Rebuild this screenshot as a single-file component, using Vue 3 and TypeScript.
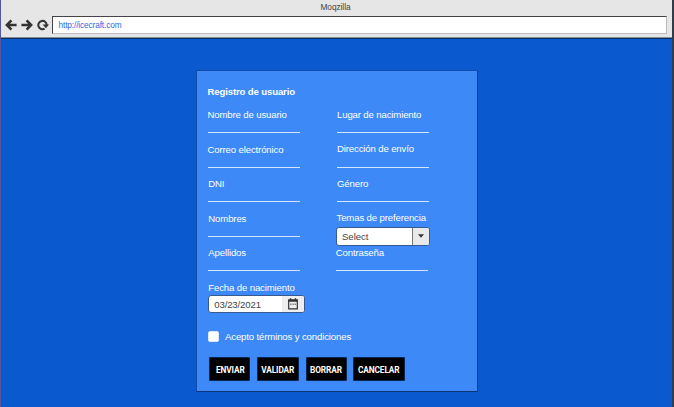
<script setup lang="ts">
import { ref } from 'vue'

interface Field {
  id: string
  label: string
}

const leftFields: Field[] = [
  { id: 'usuario', label: 'Nombre de usuario' },
  { id: 'correo', label: 'Correo electrónico' },
  { id: 'dni', label: 'DNI' },
  { id: 'nombres', label: 'Nombres' },
  { id: 'apellidos', label: 'Apellidos' },
]
const rightFields: Field[] = [
  { id: 'lugar', label: 'Lugar de nacimiento' },
  { id: 'direccion', label: 'Dirección de envío' },
  { id: 'genero', label: 'Género' },
]
const actions = ['enviar', 'validar', 'borrar', 'cancelar']
const accepted = ref(false)
</script>

<template>
  <div class="window">
    <header class="chrome">
      <div class="title">Moqzilla</div>
      <div class="toolbar">
        <svg class="nav" viewBox="0 0 12 12"><path d="M6.4 1.4 1.9 6l4.5 4.6M2.2 6H11.6" /></svg>
        <svg class="nav" viewBox="0 0 12 12"><path d="M5.6 1.4 10.1 6l-4.5 4.6M9.8 6H.4" /></svg>
        <svg class="nav reload" viewBox="0 0 12 12">
          <path d="M7.6 9.7A4.2 4.2 0 1 1 9.7 6.2" />
          <path class="head" d="M5.6 5.6H12L8.9 9.2z" />
        </svg>
        <div class="address">http://icecraft.com</div>
      </div>
    </header>

    <main class="page">
      <form class="panel" @submit.prevent>
        <h1>Registro de usuario</h1>
        <div class="columns">
          <div class="column left">
            <div v-for="f in leftFields" :key="f.id" class="field" :class="f.id">
              <span class="label">{{ f.label }}</span>
              <span class="line"></span>
            </div>
            <div class="field birth">
              <span class="label">Fecha de nacimiento</span>
              <div class="date">
                <span class="value">03/23/2021</span>
                <span class="calendar">
                  <svg viewBox="0 0 12 12">
                    <path class="frame" d="M1.7 2.2h8.6v8.6H1.7z" />
                    <path class="fill" d="M1.2 1.6h9.6v2.2H1.2zM2.8.3h1.5v2H2.8zM7.7.3h1.5v2H7.7z" />
                    <path class="days" d="M3.3 6.2h5.8" />
                  </svg>
                </span>
              </div>
            </div>
          </div>
          <div class="column right">
            <div v-for="f in rightFields" :key="f.id" class="field" :class="f.id">
              <span class="label">{{ f.label }}</span>
              <span class="line"></span>
            </div>
            <div class="field topics">
              <span class="label">Temas de preferencia</span>
              <div class="select">
                <span class="value">Select</span>
                <span class="arrow"><svg viewBox="0 0 6 4"><path d="M0 .2h6L3 3.8z" /></svg></span>
              </div>
            </div>
            <div class="field password">
              <span class="label">Contraseña</span>
              <span class="line"></span>
            </div>
          </div>
        </div>
        <label class="terms">
          <input v-model="accepted" type="checkbox" />
          <span>Acepto términos y condiciones</span>
        </label>
        <div class="actions">
          <button v-for="a in actions" :key="a" type="button" :class="a">{{ a.toUpperCase() }}</button>
        </div>
      </form>
    </main>
  </div>
</template>

<style>
body {
  margin: 0;
  overflow: hidden;
}
</style>

<style scoped>
* {
  box-sizing: border-box;
}
.window {
  width: 674px;
  height: 407px;
  display: flex;
  flex-direction: column;
  background: #0b59cf;
  border-left: 1px solid #55569c;
  border-right: 2px solid #343b49;
  font-family: "Liberation Sans", Arial, sans-serif;
  font-size: 9.6px;
  letter-spacing: -0.14px;
  color: #fff;
}
.chrome {
  height: 39px;
  flex: none;
  background: #e6e6e6;
  border-bottom: 1px solid #0c2d61;
  box-shadow: inset 0 -1px #858b94;
}
.title {
  height: 16px;
  padding: 2px 2px 0 0;
  line-height: 10px;
  font-size: 8.3px;
  letter-spacing: -0.05px;
  text-align: center;
  color: #444;
}
.toolbar {
  display: flex;
  align-items: center;
  height: 18px;
  padding: 0 5px 0 4px;
}
.nav {
  width: 12px;
  height: 12px;
  margin-right: 4px;
  fill: none;
  stroke: #333;
  stroke-width: 2.6;
}
.nav.reload {
  margin-right: 3px;
  stroke-width: 2;
}
.nav .head {
  fill: #333;
  stroke: none;
}
.address {
  flex: 1;
  height: 18px;
  padding-left: 5.5px;
  line-height: 17px;
  font-size: 8.3px;
  letter-spacing: -0.13px;
  color: #3468df;
  background: #fff;
  border: 1px solid #444;
  border-right-color: #bbb;
  border-bottom-color: #bbb;
}
.page {
  flex: 1;
  padding: 31px 0 0 195px;
}
.panel {
  width: 282px;
  height: 322px;
  padding: 15px 0 0 10.5px;
  background: #3c89f7;
  border: 1px solid #114cab;
  border-right-color: #0d408f;
  border-bottom-color: #0d3679;
}
h1 {
  height: 23px;
  margin: 0;
  line-height: 12px;
  font-size: 9.6px;
  font-weight: bold;
}
.columns {
  display: flex;
  height: 208px;
}
.column {
  width: 129px;
}
.field {
  height: 34.5px;
}
.label {
  display: block;
  height: 23px;
  line-height: 12px;
  white-space: nowrap;
}
.left .dni,
.left .nombres,
.left .apellidos,
.left .birth {
  padding-left: 0.8px;
}
.right .label {
  position: relative;
  top: -0.3px;
}
.line {
  display: block;
  width: 92px;
  height: 1px;
  background: #d3e5ff;
}
.genero,
.lugar,
.direccion {
  padding-left: 0.5px;
}
.topics .label,
.birth .label {
  height: 14px;
}
.birth .label {
  height: 13.3px;
}
.select,
.date {
  display: flex;
  overflow: hidden;
  background: #fff;
  border: 1px solid #365a91;
  border-radius: 3px;
  color: #444;
  letter-spacing: -0.05px;
}
.select {
  width: 94px;
  height: 19px;
  margin: 0 0 0 -0.5px;
  line-height: 18px;
}
.value {
  flex: 1;
  padding-left: 5px;
}
.arrow {
  width: 17px;
  display: flex;
  align-items: center;
  justify-content: center;
  background: #e9e9e9;
  border-left: 1px solid #777;
}
.arrow svg {
  width: 6px;
  height: 4px;
  fill: #333;
}
.date {
  width: 97px;
  height: 18px;
  line-height: 17px;
  letter-spacing: -0.15px;
}
.calendar {
  width: 22px;
  display: flex;
  align-items: center;
  justify-content: center;
  background: #eee;
}
.calendar svg {
  width: 12px;
  height: 12px;
}
.frame {
  fill: none;
  stroke: #333;
  stroke-width: 1.2;
}
.fill {
  fill: #333;
}
.days {
  stroke: #333;
  stroke-dasharray: 1.2 1;
}
.password {
  margin-left: -0.8px;
}
.terms {
  display: flex;
  align-items: center;
  height: 12px;
  margin-top: 13px;
  gap: 6px;
}
.terms input {
  appearance: none;
  width: 11px;
  height: 11px;
  margin: 0 0 0 0.5px;
  background: #fff;
  border: 1px solid #dceaff;
  border-radius: 2px;
}
.actions {
  display: flex;
  gap: 6.5px;
  margin: 15px 0 0 1px;
}
button {
  height: 24px;
  padding: 1px 0 0 2px;
  border: 1px solid #082655;
  border-radius: 1px;
  background: #000;
  color: #fff;
  font: bold 8.3px Roboto, sans-serif;
  letter-spacing: -0.1px;
}
.enviar {
  width: 41.5px;
}
.validar {
  width: 42.5px;
  padding-left: 0;
}
.borrar {
  width: 41px;
  padding-left: 0;
}
.cancelar {
  width: 51.5px;
  padding-left: 0;
}
</style>
